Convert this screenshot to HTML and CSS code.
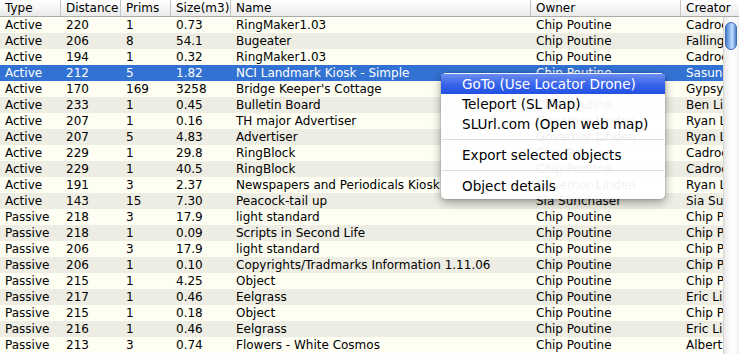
FILE: index.html
```html
<!DOCTYPE html>
<html>
<head>
<meta charset="utf-8">
<link rel="stylesheet" href="styles.css">
</head>
<body>
<div class="window">
  <div class="header">
    <div class="hc c-type">Type</div>
    <div class="hc c-dist">Distance</div>
    <div class="hc c-prims">Prims</div>
    <div class="hc c-size">Size(m3)</div>
    <div class="hc c-name">Name</div>
    <div class="hc c-owner">Owner</div>
    <div class="hc c-creator">Creator</div>
  </div>
  <div class="main">
    <div class="rows">
      <div class="row"><div class="c c-type">Active</div><div class="c c-dist">220</div><div class="c c-prims">1</div><div class="c c-size">0.73</div><div class="c c-name">RingMaker1.03</div><div class="c c-owner">Chip Poutine</div><div class="c c-creator">Cadroe Murphy</div></div>
      <div class="row"><div class="c c-type">Active</div><div class="c c-dist">206</div><div class="c c-prims">8</div><div class="c c-size">54.1</div><div class="c c-name">Bugeater</div><div class="c c-owner">Chip Poutine</div><div class="c c-creator">Falling Feather</div></div>
      <div class="row"><div class="c c-type">Active</div><div class="c c-dist">194</div><div class="c c-prims">1</div><div class="c c-size">0.32</div><div class="c c-name">RingMaker1.03</div><div class="c c-owner">Chip Poutine</div><div class="c c-creator">Cadroe Murphy</div></div>
      <div class="row selected"><div class="c c-type">Active</div><div class="c c-dist">212</div><div class="c c-prims">5</div><div class="c c-size">1.82</div><div class="c c-name">NCI Landmark Kiosk - Simple</div><div class="c c-owner">Chip Poutine</div><div class="c c-creator">Sasun Steinbeck</div></div>
      <div class="row"><div class="c c-type">Active</div><div class="c c-dist">170</div><div class="c c-prims">169</div><div class="c c-size">3258</div><div class="c c-name">Bridge Keeper's Cottage</div><div class="c c-owner">Chip Poutine</div><div class="c c-creator">Gypsy Paz</div></div>
      <div class="row"><div class="c c-type">Active</div><div class="c c-dist">233</div><div class="c c-prims">1</div><div class="c c-size">0.45</div><div class="c c-name">Bulletin Board</div><div class="c c-owner">Chip Poutine</div><div class="c c-creator">Ben Linden</div></div>
      <div class="row"><div class="c c-type">Active</div><div class="c c-dist">207</div><div class="c c-prims">1</div><div class="c c-size">0.16</div><div class="c c-name">TH major Advertiser</div><div class="c c-owner">Governor Linden</div><div class="c c-creator">Ryan Linden</div></div>
      <div class="row"><div class="c c-type">Active</div><div class="c c-dist">207</div><div class="c c-prims">5</div><div class="c c-size">4.83</div><div class="c c-name">Advertiser</div><div class="c c-owner">Governor Linden</div><div class="c c-creator">Ryan Linden</div></div>
      <div class="row"><div class="c c-type">Active</div><div class="c c-dist">229</div><div class="c c-prims">1</div><div class="c c-size">29.8</div><div class="c c-name">RingBlock</div><div class="c c-owner">Chip Poutine</div><div class="c c-creator">Cadroe Murphy</div></div>
      <div class="row"><div class="c c-type">Active</div><div class="c c-dist">229</div><div class="c c-prims">1</div><div class="c c-size">40.5</div><div class="c c-name">RingBlock</div><div class="c c-owner">Chip Poutine</div><div class="c c-creator">Cadroe Murphy</div></div>
      <div class="row"><div class="c c-type">Active</div><div class="c c-dist">191</div><div class="c c-prims">3</div><div class="c c-size">2.37</div><div class="c c-name">Newspapers and Periodicals Kiosk</div><div class="c c-owner">Governor Linden</div><div class="c c-creator">Ryan Linden</div></div>
      <div class="row"><div class="c c-type">Active</div><div class="c c-dist">143</div><div class="c c-prims">15</div><div class="c c-size">7.30</div><div class="c c-name">Peacock-tail up</div><div class="c c-owner">Sia Sunchaser</div><div class="c c-creator">Sia Sunchaser</div></div>
      <div class="row"><div class="c c-type">Passive</div><div class="c c-dist">218</div><div class="c c-prims">3</div><div class="c c-size">17.9</div><div class="c c-name">light standard</div><div class="c c-owner">Chip Poutine</div><div class="c c-creator">Chip Poutine</div></div>
      <div class="row"><div class="c c-type">Passive</div><div class="c c-dist">218</div><div class="c c-prims">1</div><div class="c c-size">0.09</div><div class="c c-name">Scripts in Second Life</div><div class="c c-owner">Chip Poutine</div><div class="c c-creator">Chip Poutine</div></div>
      <div class="row"><div class="c c-type">Passive</div><div class="c c-dist">206</div><div class="c c-prims">3</div><div class="c c-size">17.9</div><div class="c c-name">light standard</div><div class="c c-owner">Chip Poutine</div><div class="c c-creator">Chip Poutine</div></div>
      <div class="row"><div class="c c-type">Passive</div><div class="c c-dist">206</div><div class="c c-prims">1</div><div class="c c-size">0.10</div><div class="c c-name">Copyrights/Tradmarks Information 1.11.06</div><div class="c c-owner">Chip Poutine</div><div class="c c-creator">Chip Poutine</div></div>
      <div class="row"><div class="c c-type">Passive</div><div class="c c-dist">215</div><div class="c c-prims">1</div><div class="c c-size">4.25</div><div class="c c-name">Object</div><div class="c c-owner">Chip Poutine</div><div class="c c-creator">Chip Poutine</div></div>
      <div class="row"><div class="c c-type">Passive</div><div class="c c-dist">217</div><div class="c c-prims">1</div><div class="c c-size">0.46</div><div class="c c-name">Eelgrass</div><div class="c c-owner">Chip Poutine</div><div class="c c-creator">Eric Linden</div></div>
      <div class="row"><div class="c c-type">Passive</div><div class="c c-dist">215</div><div class="c c-prims">1</div><div class="c c-size">0.18</div><div class="c c-name">Object</div><div class="c c-owner">Chip Poutine</div><div class="c c-creator">Chip Poutine</div></div>
      <div class="row"><div class="c c-type">Passive</div><div class="c c-dist">216</div><div class="c c-prims">1</div><div class="c c-size">0.46</div><div class="c c-name">Eelgrass</div><div class="c c-owner">Chip Poutine</div><div class="c c-creator">Eric Linden</div></div>
      <div class="row"><div class="c c-type">Passive</div><div class="c c-dist">213</div><div class="c c-prims">3</div><div class="c c-size">0.74</div><div class="c c-name">Flowers - White Cosmos</div><div class="c c-owner">Chip Poutine</div><div class="c c-creator">Albert Linden</div></div>
    </div>
    <div class="scrollbar"><div class="thumb"></div></div>
  </div>
  <div class="menu">
    <div class="item active">GoTo (Use Locator Drone)</div>
    <div class="item">Teleport (SL Map)</div>
    <div class="item">SLUrl.com (Open web map)</div>
    <div class="sep"></div>
    <div class="item">Export selected objects</div>
    <div class="sep"></div>
    <div class="item">Object details</div>
  </div>
</div>
</body>
</html>
```
FILE: styles.css
```css
html, body {
  margin: 0;
  padding: 0;
  background: #ffffff;
}
.window {
  position: relative;
  width: 739px;
  height: 354px;
  overflow: hidden;
  font-family: "DejaVu Sans", sans-serif;
  font-size: 12px;
  color: #000;
}
.header {
  display: flex;
  height: 17px;
  box-sizing: border-box;
  border-bottom: 1px solid #ababab;
  background: linear-gradient(#ffffff, #f6f6f6 50%, #e9e9e9);
}
.hc {
  box-sizing: border-box;
  height: 16px;
  line-height: 16px;
  padding-left: 5px;
  border-right: 1px solid #c6c6c6;
  white-space: nowrap;
  overflow: hidden;
}
.hc.c-creator { border-right: none; flex: 1; }
.c-type { width: 61px; flex: none; }
.c-dist { width: 60px; flex: none; }
.c-prims { width: 50px; flex: none; }
.c-size { width: 60px; flex: none; }
.c-name { width: 300px; flex: none; }
.c-owner { width: 150px; flex: none; }
.c-creator { flex: 1; min-width: 0; }
.main {
  display: flex;
  height: 337px;
}
.rows {
  width: 723px;
  flex: none;
  overflow: hidden;
}
.row {
  display: flex;
  height: 16px;
  line-height: 16px;
  background: #fefef2;
}
.row:nth-child(even) {
  background: #eeede3;
}
.row.selected {
  background: #3272d3;
  color: #ffffff;
}
.c {
  box-sizing: border-box;
  padding-left: 5px;
  white-space: nowrap;
  overflow: hidden;
}
.scrollbar {
  flex: 1;
  position: relative;
  box-sizing: border-box;
  border-left: 1px solid #d6d6d6;
  background: linear-gradient(90deg, #e9e9e9, #fbfbfb 40%, #ffffff 70%, #f0f0f0);
}
.thumb {
  position: absolute;
  left: 1px;
  top: 5px;
  width: 12px;
  height: 28px;
  border-radius: 6px;
  box-sizing: border-box;
  border: 1px solid #3f6db4;
  background: linear-gradient(90deg, #4a7ccc, #9cc4f4 45%, #c9e1fb 60%, #6d9ee0 90%, #4a7ccc);
}
.menu {
  position: absolute;
  left: 441px;
  top: 73px;
  width: 224px;
  padding: 1px 0 3px;
  border-radius: 5px;
  background: rgba(255, 255, 255, 0.94);
  box-shadow: 0 3px 10px rgba(0, 0, 0, 0.4), 0 0 0 1px rgba(0, 0, 0, 0.07);
  font-size: 13.6px;
  box-sizing: border-box;
}
.item {
  height: 20px;
  line-height: 20px;
  padding-left: 21px;
  white-space: nowrap;
}
.item.active {
  color: #ffffff;
  background: linear-gradient(#6a8cf2, #3a66ea 50%, #2150e3);
}
.sep {
  height: 11px;
  display: flex;
  align-items: center;
}
.sep::before {
  content: "";
  display: block;
  width: 100%;
  margin: 0 1px;
  height: 1px;
  background: #dcdcdc;
}
```
